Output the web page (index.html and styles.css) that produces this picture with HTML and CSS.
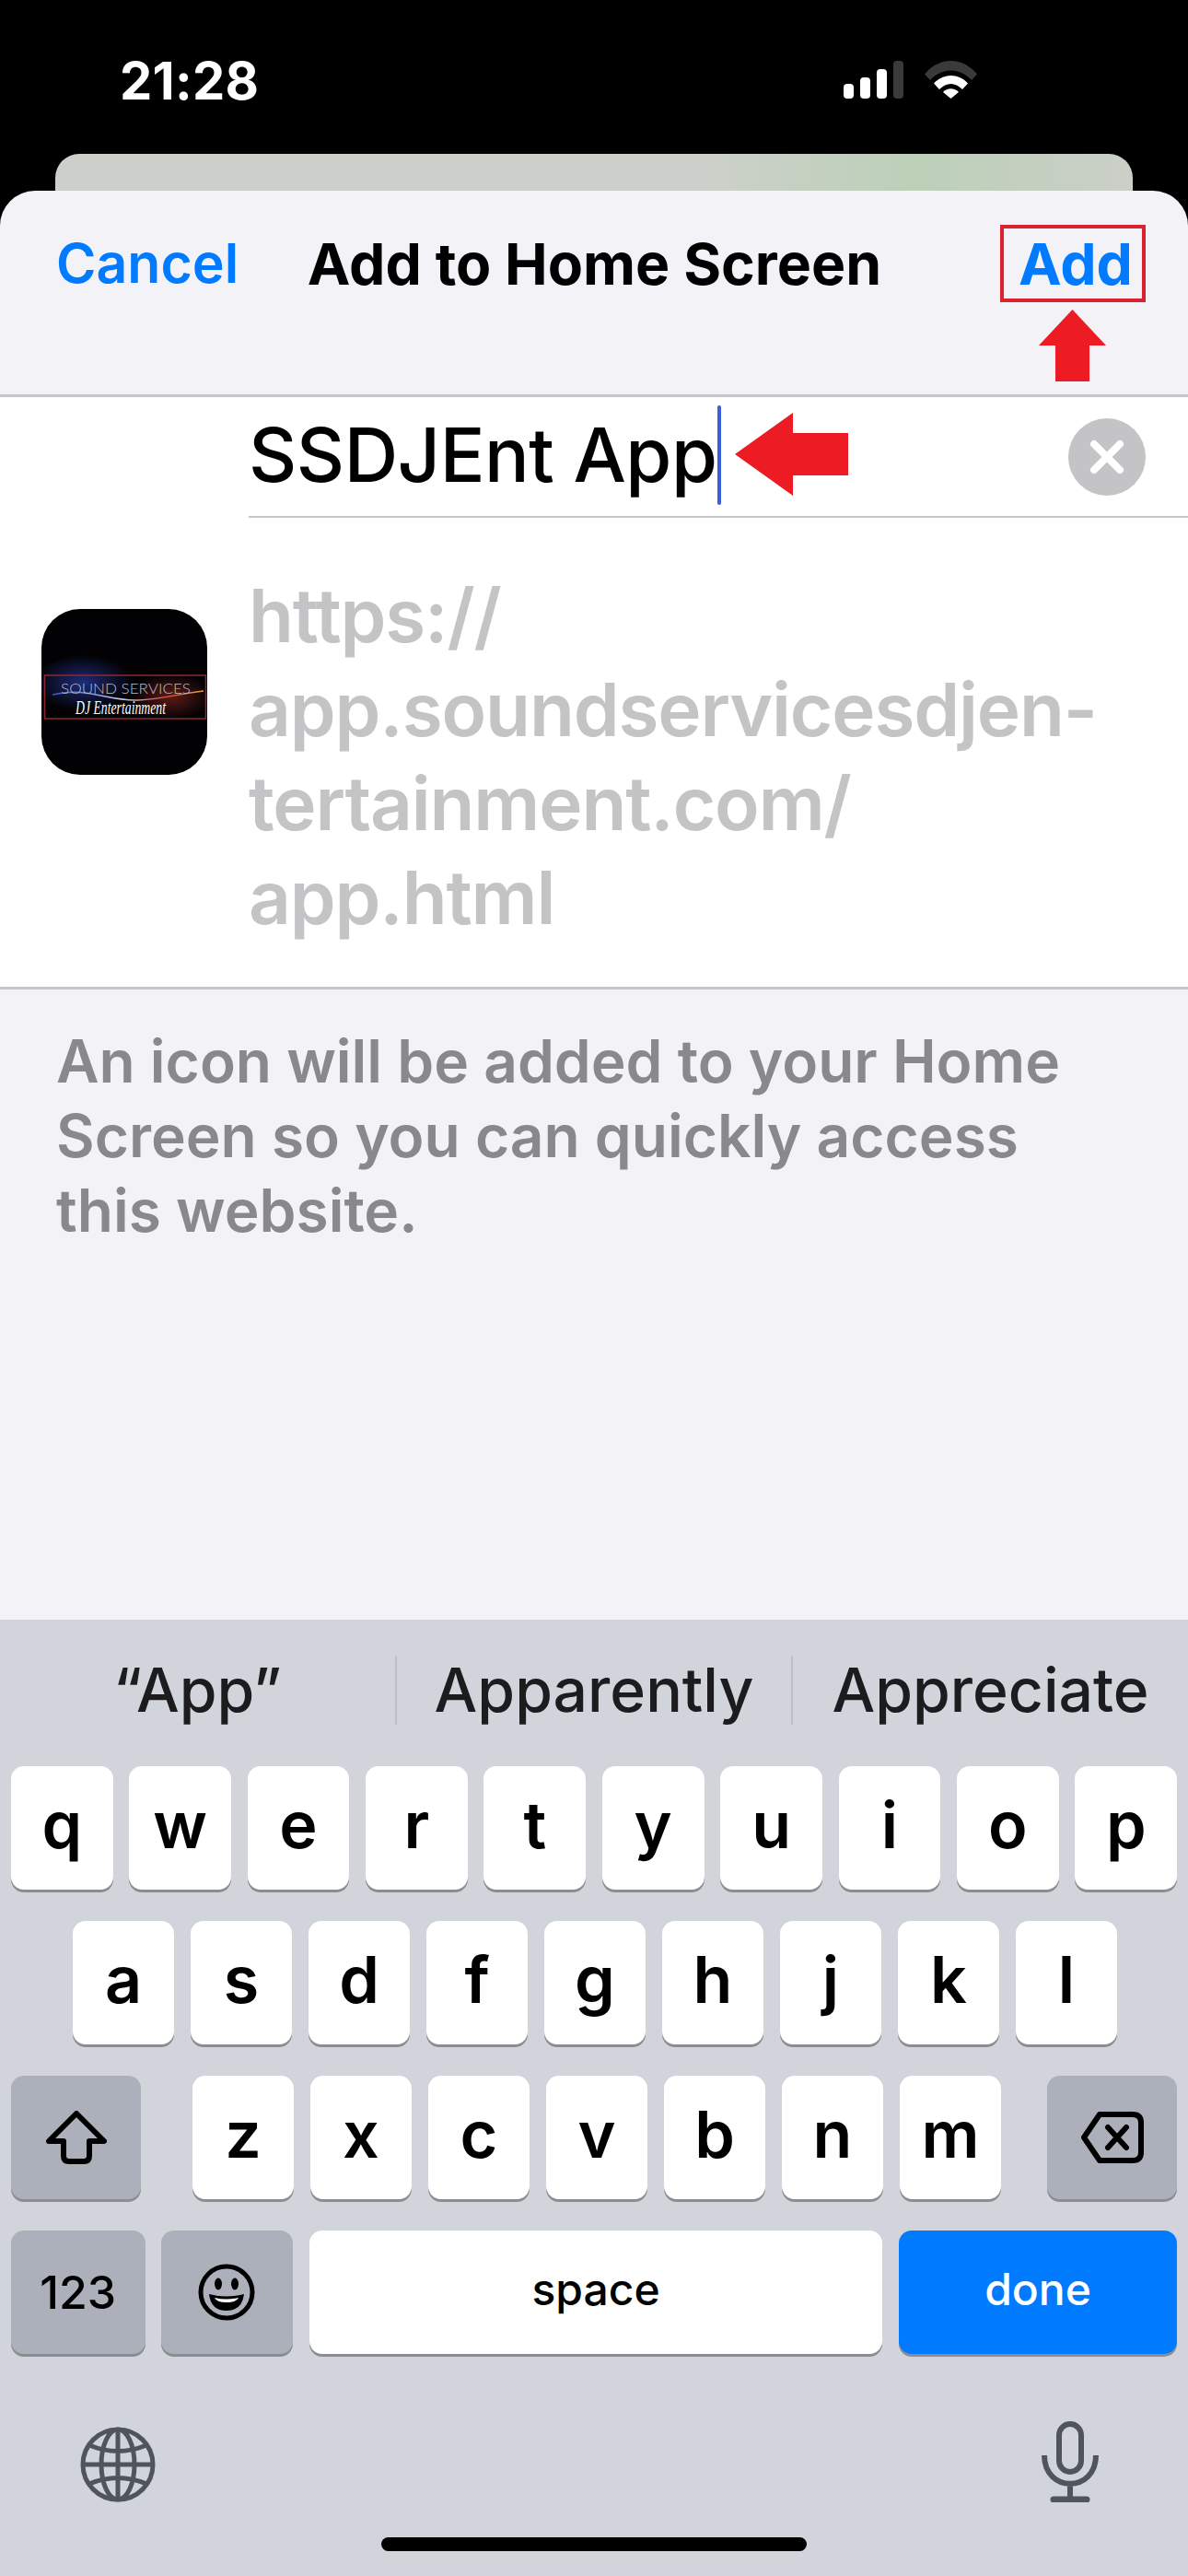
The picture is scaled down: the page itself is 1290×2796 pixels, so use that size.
FILE: index.html
```html
<!DOCTYPE html>
<html lang="en">
<head>
    <meta charset="UTF-8">
    <meta name="viewport" content="width=device-width, initial-scale=1.0">
    <title>Add to Home Screen</title>
    <link rel="stylesheet" href="styles.css">
</head>
<body>
    <div class="phone">
        <div class="status">
            <span class="time">21:28</span>
            <div class="status-icons">
                <svg class="signal" width="65" height="41" viewBox="0 0 65 41">
                    <rect x="0" y="25" width="11" height="16" rx="4" fill="#fff"/>
                    <rect x="18" y="18" width="11" height="23" rx="4" fill="#fff"/>
                    <rect x="36" y="9" width="11" height="32" rx="4" fill="#fff"/>
                    <rect x="54" y="0" width="11" height="41" rx="4" fill="#3a3a38"/>
                </svg>
                <svg class="wifi" width="57" height="41" viewBox="0 0 57 41">
                    <path d="M0 14.5C16-4.8 41-4.8 57 14.5L51 21C38 7 19 7 6 21Z" fill="#3a3a38"/>
                    <path d="M10 24.500C20 13 37 13 47 24.500L41 31C33 23 24 23 16 31Z" fill="#fff"/>
                    <path d="M20 34C25 29 32 29 37 34L28.500 41Z" fill="#fff"/>
                </svg>
            </div>
        </div>
        <div class="peek"></div>

        <div class="sheet">
            <div class="nav">
                <span class="nav-cancel">Cancel</span>
                <span class="nav-title">Add to Home Screen</span>
                <span class="nav-add">Add</span>
                <div class="add-box"></div>
                <svg class="arrow-up" width="73" height="78" viewBox="0 0 73 78">
                    <path d="M36.500 0L73 39H55V78H18V39H0Z" fill="#ed1c24"/>
                </svg>
            </div>

            <div class="form">
                <svg class="app-icon" width="180" height="180" viewBox="0 0 180 180">
                    <defs>
                        <radialGradient id="glowBlue" cx="0.25" cy="0.4" r="0.3">
                            <stop offset="0" stop-color="#1f2c7a"/>
                            <stop offset="1" stop-color="#1f2c7a" stop-opacity="0"/>
                        </radialGradient>
                        <radialGradient id="glowRed" cx="0.78" cy="0.55" r="0.25">
                            <stop offset="0" stop-color="#5e1a18"/>
                            <stop offset="1" stop-color="#5e1a18" stop-opacity="0"/>
                        </radialGradient>
                        <linearGradient id="swoosh" x1="0" x2="1" y1="0" y2="0">
                            <stop offset="0" stop-color="#3a55c8"/>
                            <stop offset="0.45" stop-color="#c8c8e8"/>
                            <stop offset="0.75" stop-color="#e0503a"/>
                            <stop offset="1" stop-color="#e89a50"/>
                        </linearGradient>
                    </defs>
                    <rect width="180" height="180" rx="42" fill="#020204"/>
                    <rect y="40" width="180" height="100" fill="url(#glowBlue)"/>
                    <rect y="40" width="180" height="100" fill="url(#glowRed)"/>
                    <rect x="3.500" y="72" width="175" height="47" fill="none" stroke="#8a2a30" stroke-width="1.500"/>
                    <path d="M12 93C50 84 70 100 105 99C130 98 150 92 176 89" fill="none" stroke="url(#swoosh)" stroke-width="1.500"/>
                    <text class="logo-top" x="21" y="92" textLength="141" lengthAdjust="spacingAndGlyphs">SOUND SERVICES</text>
                    <text class="logo-script" x="37" y="114" textLength="98" lengthAdjust="spacingAndGlyphs">DJ Entertainment</text>
                </svg>
                <div class="fields">
                    <div class="name-row">
                        <span class="name-text">SSDJEnt App</span><span class="caret"></span>
                        <svg class="arrow-left" width="123" height="90" viewBox="0 0 123 90">
                            <path d="M0 45L63 0V22H123V68H63V90Z" fill="#ed1c24"/>
                        </svg>
                        <svg class="clear" width="84" height="84" viewBox="0 0 84 84">
                            <circle cx="42" cy="42" r="42" fill="#c4c4c6"/>
                            <path d="M28 28L56 56M56 28L28 56" stroke="#fff" stroke-width="8" stroke-linecap="round"/>
                        </svg>
                    </div>
                    <div class="url">
                        https://<br>
                        app.soundservicesdjen-<br>
                        tertainment.com/<br>
                        app.html
                    </div>
                </div>
            </div>

            <p class="hint">An icon will be added to your Home<br>Screen so you can quickly access<br>this website.</p>
        </div>

        <div class="keyboard">
            <div class="suggestions">
                <span class="suggestion">“App”</span>
                <span class="suggestion">Apparently</span>
                <span class="suggestion">Appreciate</span>
            </div>
            <div class="row row-top">
                <div class="key">q</div><div class="key">w</div><div class="key">e</div><div class="key">r</div><div class="key">t</div><div class="key">y</div><div class="key">u</div><div class="key">i</div><div class="key">o</div><div class="key">p</div>
            </div>
            <div class="row row-home">
                <div class="key">a</div><div class="key">s</div><div class="key">d</div><div class="key">f</div><div class="key">g</div><div class="key">h</div><div class="key">j</div><div class="key">k</div><div class="key">l</div>
            </div>
            <div class="row row-split">
                <div class="key key-grey key-side">
                    <svg width="66" height="58" viewBox="0 0 66 58">
                        <path d="M33 3L63 33H47V49Q47 55 41 55H25Q19 55 19 49V33H3Z" fill="none" stroke="#000" stroke-width="6" stroke-linejoin="round"/>
                    </svg>
                </div>
                <div class="letters">
                    <div class="key">z</div><div class="key">x</div><div class="key">c</div><div class="key">v</div><div class="key">b</div><div class="key">n</div><div class="key">m</div>
                </div>
                <div class="key key-grey key-side">
                    <svg width="68" height="56" viewBox="0 0 68 56">
                        <path d="M20 3H56Q65 3 65 12V44Q65 53 56 53H20L3 28Z" fill="none" stroke="#000" stroke-width="6" stroke-linejoin="round"/>
                        <path d="M29 17L49 39M49 17L29 39" stroke="#000" stroke-width="6" stroke-linecap="round"/>
                    </svg>
                </div>
            </div>
            <div class="row row-bottom">
                <div class="key key-grey key-num">123</div>
                <div class="key key-grey key-emoji">
                    <svg width="62" height="62" viewBox="0 0 62 62">
                        <circle cx="31" cy="31" r="28" fill="none" stroke="#000" stroke-width="5"/>
                        <ellipse cx="22" cy="22" rx="4" ry="6.500"/>
                        <ellipse cx="40" cy="22" rx="4" ry="6.500"/>
                        <path d="M12 33Q31 38 50 33Q48 51 31 51Q14 51 12 33Z"/>
                        <path d="M18 37Q31 40 44 37Q42 42 31 42Q20 42 18 37Z" fill="#fff"/>
                    </svg>
                </div>
                <div class="key key-space">space</div>
                <div class="key key-done">done</div>
            </div>
            <div class="kb-bottom">
                <svg width="82" height="82" viewBox="0 0 82 82" fill="none" stroke="#50555c" stroke-width="5">
                    <circle cx="41" cy="41" r="38"/>
                    <ellipse cx="41" cy="41" rx="18" ry="38"/>
                    <path d="M41 3V79M3 41H79M10 20Q41 33 72 20M10 62Q41 49 72 62"/>
                </svg>
                <svg width="62" height="88" viewBox="0 0 62 88" fill="none" stroke="#50555c" stroke-width="6">
                    <rect x="19" y="3" width="24" height="52" rx="12"/>
                    <path d="M3 37C3 78 59 78 59 37M31 68V84"/>
                    <path d="M13 85H49" stroke-width="7" stroke-linecap="round"/>
                </svg>
            </div>
            <div class="home-bar"></div>
        </div>
    </div>
</body>
</html>
```

FILE: styles.css
```css
* {
    box-sizing: border-box;
}
body {
    margin: 0;
    padding: 0;
    background-color: #000;
    font-family: Inter, "Liberation Sans", sans-serif;
}
.phone {
    width: 1290px;
    height: 2796px;
    display: flex;
    flex-direction: column;
    overflow: hidden;
    background-color: #000;
}

/* status bar */
.status {
    height: 167px;
    padding: 58px 229px 0 130px;
    display: flex;
    justify-content: space-between;
    align-items: flex-start;
    flex-shrink: 0;
}
.time {
    color: #fff;
    font-size: 56px;
    font-weight: 700;
    line-height: 60px;
    letter-spacing: 0.3px;
}
.status-icons {
    display: flex;
    gap: 23px;
    margin-top: 8px;
}
.peek {
    height: 40px;
    margin: 0 60px;
    flex-shrink: 0;
    border-radius: 26px 26px 0 0;
    background: linear-gradient(90deg, #cdcfca 0%, #cdd0ca 60%, #bcd0b8 80%, #cbcfc8 100%);
}

/* sheet */
.sheet {
    height: 1551px;
    flex-shrink: 0;
    background-color: #f2f2f7;
    border-radius: 38px 38px 0 0;
}
.nav {
    position: relative;
    height: 224px;
    padding: 41px 60px 0 61px;
    display: grid;
    grid-template-columns: 1fr auto 1fr;
    align-items: start;
    border-bottom: 3px solid #c6c6c8;
    font-size: 62.500px;
    line-height: 76px;
}
.nav-cancel {
    color: #007aff;
    font-size: 59px;
    font-weight: 600;
}
.nav-title {
    color: #000;
    font-weight: 700;
}
.nav-add {
    color: #007aff;
    font-weight: 700;
    text-align: right;
}
.add-box {
    position: absolute;
    left: 1086px;
    top: 37px;
    width: 158px;
    height: 84px;
    border: 4px solid #d9232e;
}
.arrow-up {
    position: absolute;
    left: 1128px;
    top: 129px;
}

.form {
    height: 643px;
    background-color: #fff;
    border-bottom: 3px solid #c6c6c8;
    padding-left: 45px;
    display: flex;
    align-items: center;
    gap: 45px;
}
.app-icon {
    flex-shrink: 0;
}
.logo-top {
    font-family: Lato, sans-serif;
    font-size: 16px;
    font-weight: 300;
    fill: #b9bcc8;
}
.logo-script {
    font-family: "Liberation Serif", serif;
    font-style: italic;
    font-size: 20px;
    fill: #fff;
}
.fields {
    flex: 1;
    align-self: stretch;
}
.name-row {
    position: relative;
    height: 131px;
    border-bottom: 2px solid #c6c6c8;
    display: flex;
    align-items: flex-start;
    padding-top: 9px;
}
.name-text {
    padding-top: 4px;
    font-size: 81px;
    font-weight: 500;
    line-height: 100px;
    letter-spacing: -0.500px;
    color: #000;
}
.caret {
    width: 4px;
    height: 108px;
    border-radius: 2px;
    background-color: #3a5fd9;
}
.arrow-left {
    position: absolute;
    left: 528px;
    top: 17px;
}
.clear {
    position: absolute;
    left: 890px;
    top: 23px;
}
.url {
    padding-top: 55px;
    font-size: 80px;
    font-weight: 600;
    line-height: 102px;
    letter-spacing: -1.150px;
    color: #c4c4c6;
}
.hint {
    margin: 0;
    padding: 37px 61px 0;
    font-size: 64px;
    font-weight: 600;
    line-height: 81px;
    color: #88888d;
}

/* keyboard */
.keyboard {
    flex: 1;
    background-color: #d1d4db;
    padding-top: 39px;
}
.suggestions {
    height: 75px;
    margin-bottom: 45px;
    padding: 0;
    display: grid;
    grid-template-columns: 429px 430px 431px;
}
.suggestion {
    font-size: 66px;
    font-weight: 500;
    line-height: 75px;
    color: #1c1c1e;
    text-align: center;
    border-left: 2px solid #bcbfc6;
}
.suggestion:first-child {
    border-left: none;
}
.row {
    display: flex;
    justify-content: center;
    gap: 18px;
    margin-bottom: 34px;
}
.row-top {
    gap: 17.600px;
}
.row-top .key {
    width: 110.800px;
}
.row-home {
    padding-left: 2px;
}
.row-split {
    justify-content: space-between;
    padding: 0 12px;
}
.row-split .letters {
    margin-left: 6px;
}
.row-bottom {
    padding: 0 12px;
    gap: 18px;
    justify-content: flex-start;
}
.letters {
    display: flex;
    gap: 18px;
}
.key {
    width: 110px;
    height: 134px;
    background-color: #fff;
    border-radius: 14px;
    box-shadow: 0 3px 0 #8b8d92;
    display: flex;
    align-items: center;
    justify-content: center;
    font-size: 70px;
    font-weight: 600;
    color: #000;
    padding-bottom: 8px;
}
.key-grey {
    background-color: #abb0bb;
}
.key-side {
    width: 141px;
    padding-bottom: 0;
}
.key-num {
    width: 146px;
    font-size: 50px;
    font-weight: 500;
    padding-bottom: 0;
}
.key-emoji {
    width: 144px;
    margin-left: -1px;
    padding-bottom: 0;
}
.key-space {
    width: 624px;
    font-size: 48px;
    font-weight: 500;
}
.key-done {
    width: 303px;
    background-color: #007aff;
    color: #fff;
    font-size: 48px;
    font-weight: 500;
}
.kb-bottom {
    display: flex;
    justify-content: space-between;
    padding: 39px 97px 0 87px;
    align-items: flex-end;
    height: 127px;
}
.home-bar {
    width: 462px;
    height: 15px;
    margin: 38px auto 0;
    border-radius: 8px;
    background-color: #000;
}
```
